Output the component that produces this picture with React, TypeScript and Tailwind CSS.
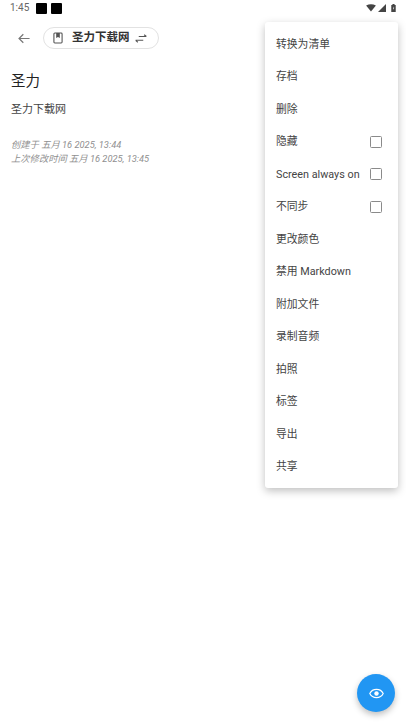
const F = { fontFamily: 'Roboto, "Noto Sans CJK SC", sans-serif' };

const items: [string, boolean][] = [
  ["转换为清单", false],
  ["存档", false],
  ["删除", false],
  ["隐藏", true],
  ["Screen always on", true],
  ["不同步", true],
  ["更改颜色", false],
  ["禁用 Markdown", false],
  ["附加文件", false],
  ["录制音频", false],
  ["拍照", false],
  ["标签", false],
  ["导出", false],
  ["共享", false],
];

export default function App() {
  return (
    <div className="relative w-[406px] h-[723px] bg-white overflow-hidden" style={F}>
      {/* status bar */}
      <div className="h-[16px] flex items-center justify-between pl-[10px] pr-[10px]">
        <div className="flex items-center">
          <span className="text-[10px] leading-none text-[#666] w-[26px]">1:45</span>
          <div className="w-[11px] h-[11px] bg-black rounded-[1px]" />
          <div className="w-[11px] h-[11px] bg-black rounded-[1px] ml-[4px]" />
        </div>
        <div className="flex items-center gap-[2px]">
          <svg width="10" height="8" viewBox="0 0 11 9"><path d="M0 1.8Q5.5 -1.4 11 1.8L5.5 8.5Z" fill="#444" /></svg>
          <svg width="8" height="8" viewBox="0 0 9 9"><path d="M0 9L9 0V9Z" fill="#444" /></svg>
          <svg className="ml-[3px]" width="5" height="8" viewBox="0 0 5 9"><path d="M1.3 0H3.7V1H5V9H0V1H1.3Z" fill="#444" /><path d="M2.9 2.5L1.8 5H2.6L2.1 7L3.4 4.3H2.6Z" fill="#fff" /></svg>
        </div>
      </div>

      {/* toolbar */}
      <div className="h-[44px] flex items-center pl-[18px]">
        <svg width="12" height="11" viewBox="0 0 14 12" fill="none" stroke="#777" strokeWidth="1.4">
          <path d="M13.5 6H1.2M6.2 1L1.2 6L6.2 11" />
        </svg>
        <div className="ml-[13px] h-[22px] w-[116px] rounded-full border border-[#e2e2e2] flex items-center pl-[9px]">
          <svg width="10" height="12" viewBox="0 0 11 13" fill="none">
            <rect x="1" y="1" width="9" height="11" rx="1" stroke="#555" strokeWidth="1.2" />
            <path d="M3.5 1H7.5V6.5L5.5 5.3L3.5 6.5Z" fill="#555" />
          </svg>
          <span className="ml-[9px] text-[11.5px] font-bold text-[#333] leading-none">圣力下载网</span>
          <svg className="ml-[5px]" width="12" height="9" viewBox="0 0 13 10" fill="none" stroke="#555" strokeWidth="1.2">
            <path d="M4 2.8H12.5M10 0.8L12.5 2.8M9 7H0.5M3 9.2L0.5 7" />
          </svg>
        </div>
      </div>

      {/* note */}
      <div className="pl-[11px]">
        <h1 className="text-[14.5px] leading-[20px] font-normal text-[#222] mt-[12px]">圣力</h1>
        <p className="text-[11px] leading-[14px] text-[#444] mt-[11px]">圣力下载网</p>
        <div className="mt-[21px] text-[9.3px] leading-[14px] italic text-[#8f8f8f]">
          <div>创建于 五月 16 2025, 13:44</div>
          <div>上次修改时间 五月 16 2025, 13:45</div>
        </div>
      </div>

      {/* overflow menu */}
      <div className="absolute left-[265px] top-[22px] w-[133px] h-[466px] bg-white rounded-[3px] shadow-[0_3px_8px_rgba(0,0,0,0.25)] pt-[5.8px] flex flex-col">
        {items.map(([label, check]) => (
          <div key={label} className="h-[32.5px] shrink-0 flex items-center justify-between pl-[11px] pr-[16px]">
            <span className="pt-[2px] text-[10.8px] text-[#444] leading-none whitespace-nowrap">{label}</span>
            {check && <div className="w-[12px] h-[12px] border-[1.5px] border-[#8a8a8a] rounded-[1.5px]" />}
          </div>
        ))}
      </div>

      {/* FAB */}
      <div className="absolute left-[357px] top-[674px] w-[38px] h-[38px] rounded-full bg-[#2196f3] shadow-[0_3px_6px_rgba(0,0,0,0.25)] flex items-center justify-center">
        <svg width="15" height="11" viewBox="0 0 15 11" fill="none">
          <path d="M0.8 5.5C3.5 0 11.5 0 14.2 5.5C11.5 11 3.5 11 0.8 5.5Z" stroke="#fff" strokeWidth="1.2" />
          <circle cx="7.5" cy="5.5" r="2.2" fill="#fff" />
        </svg>
      </div>
    </div>
  );
}
